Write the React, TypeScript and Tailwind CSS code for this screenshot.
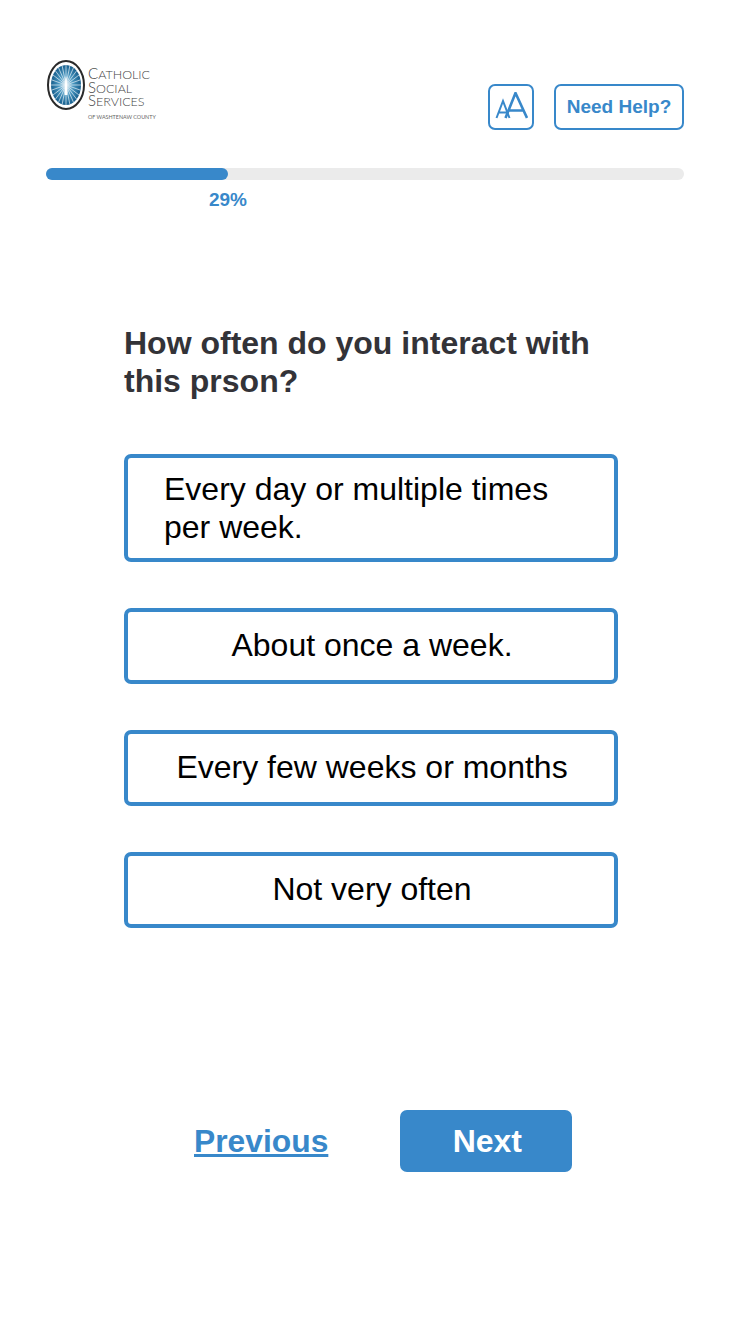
const OPTIONS = [
  { label: 'Every day or multiple times per week.', multi: true },
  { label: 'About once a week.' },
  { label: 'Every few weeks or months' },
  { label: 'Not very often' },
]

const RAYS = Array.from({ length: 24 }, (_, i) => (i * 360) / 24)

function Logo() {
  return (
    <div className="flex w-[112px] h-[62px] items-start">
      <svg width="40" height="51" viewBox="0 0 40 51" className="shrink-0">
        <defs>
          <radialGradient id="sun" cx="50%" cy="50%" r="50%">
            <stop offset="0%" stopColor="#d5e8f3" />
            <stop offset="45%" stopColor="#4f9cc4" />
            <stop offset="100%" stopColor="#175f8e" />
          </radialGradient>
        </defs>
        <ellipse cx="20" cy="25" rx="18" ry="24" fill="#fff" stroke="#2a2a2a" strokeWidth="2" />
        <ellipse cx="20" cy="25" rx="15" ry="20" fill="url(#sun)" />
        {RAYS.map((a) => (
          <line
            key={a}
            x1="20"
            y1="25"
            x2={20 + 15 * Math.cos((a * Math.PI) / 180)}
            y2={25 + 20 * Math.sin((a * Math.PI) / 180)}
            stroke="#e6f1f7"
            strokeWidth="0.7"
          />
        ))}
        <path d="M18.6 35 L19.3 19 L20 16 L20.7 19 L21.4 35 Z" fill="#fff" />
      </svg>
      <div className="ml-[2px] mt-[7px] font-['Lato',sans-serif] text-[#444]">
        <div className="h-[13.5px] text-[12.5px] leading-[13.5px] uppercase font-light first-letter:text-[15px]">Catholic</div>
        <div className="h-[13.5px] text-[12.5px] leading-[13.5px] uppercase font-light first-letter:text-[15px]">Social</div>
        <div className="h-[13.5px] text-[12.5px] leading-[13.5px] uppercase font-light first-letter:text-[15px]">Services</div>
        <div className="mt-[6px] text-[5.4px] leading-[7px] whitespace-nowrap uppercase text-[#666]">of Washtenaw County</div>
      </div>
    </div>
  )
}

export default function App() {
  return (
    <div className="min-h-[1334px] bg-white font-['Liberation_Sans',Arial,sans-serif]">
      <div className="pl-[46px] pr-[66px] pt-[60px]">
        {/* Header */}
        <div className="flex items-start justify-between h-[70px]">
          <Logo />
          <div className="flex gap-[20px] mt-[24px]">
            <button className="flex w-[46px] h-[46px] items-center justify-center rounded-[7px] border-2 border-[#3888ca]">
              <svg width="34" height="30" viewBox="0 0 34 30" fill="none" stroke="#3888ca">
                <path d="M2.5 26 L9 9 L15.5 26 M4.5 20.5 H13.5" strokeWidth="2" />
                <path d="M11.5 26 L21.5 1 L33 26 M14.5 18.5 H29.5" strokeWidth="2.6" />
              </svg>
            </button>
            <button className="w-[130px] h-[46px] rounded-[7px] border-2 border-[#3888ca] text-[19px] font-bold text-[#3888ca]">
              Need Help?
            </button>
          </div>
        </div>

        {/* Progress */}
        <div className="mt-[38px] h-[12px] rounded-full bg-[#ebebeb]">
          <div className="h-full w-[182px] rounded-full bg-[#3888ca]" />
        </div>
        <div className="mt-[8px] w-[364px] text-center text-[19px] leading-[23px] font-bold text-[#3888ca]">29%</div>
      </div>

      {/* Question */}
      <div className="mt-[113px] ml-[124px] w-[494px]">
        <h1 className="text-[32px] leading-[38px] font-bold text-[#333338]">
          How often do you interact with this prson?
        </h1>

        <div className="mt-[54px] flex flex-col gap-[46px]">
          {OPTIONS.map((opt) => (
            <button
              key={opt.label}
              className={`rounded-[7px] border-4 border-[#3888ca] text-[32px] leading-[38px] text-black ${
                opt.multi ? 'h-[108px] pl-[36px] pr-[40px] text-left' : 'h-[76px] pl-[2px] pb-[2px] text-center'
              }`}
            >
              {opt.label}
            </button>
          ))}
        </div>

        {/* Footer nav */}
        <div className="mt-[182px] flex items-center">
          <a className="ml-[70px] mt-[2px] text-[31.8px] font-bold text-[#3888ca] underline">Previous</a>
          <button className="ml-[72px] h-[62px] w-[172px] rounded-[7px] bg-[#3888ca] pl-[2px] text-[32px] font-bold text-white">
            Next
          </button>
        </div>
      </div>
    </div>
  )
}
